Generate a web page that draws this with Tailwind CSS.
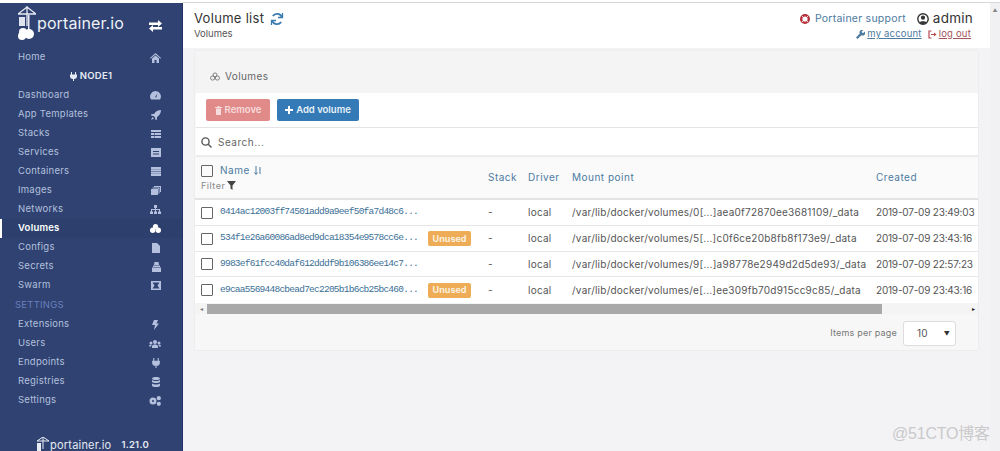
<!DOCTYPE html>
<html lang="en">
<head>
<meta charset="UTF-8">
<title>Volume list - Portainer</title>
<script src="https://cdn.jsdelivr.net/npm/@tailwindcss/browser@4"></script>
</head>
<body class="bg-white">
<div class="relative w-[1000px] h-[451px] overflow-hidden pt-[3px] flex font-['Inter',sans-serif]">

    <!-- Sidebar -->
    <aside class="w-[183px] h-[448px] shrink-0 overflow-hidden bg-[#2f4271] border-r border-[#23306a] text-[#b4c0de] text-[9.5px] tracking-[0.25px] flex flex-col">
        <div class="h-[45px] shrink-0 pl-[18px] pr-[20px] flex items-center justify-between">
            <div class="flex items-center">
                <svg class="w-[18px] h-[36px] -mt-[3px]" viewBox="0 0 18 36">
                    <path d="M0 8 L9 1 L18 8 M9 0 V20 M0 8 H18" fill="none" stroke="#e8ecf4" stroke-width="1.3"/>
                    <rect x="1" y="11" width="6" height="9" fill="#dfe4ee"/>
                    <rect x="10" y="9" width="1.5" height="17" fill="#e8ecf4"/>
                    <circle cx="5" cy="26" r="4" fill="#fff"/><circle cx="11" cy="28" r="5" fill="#fff"/><circle cx="4" cy="30" r="4" fill="#fff"/>
                </svg>
                <span class="ml-[1px] text-[#eef1f7] text-[16px] tracking-[0.1px] -mt-[5px]">portainer.io</span>
            </div>
            <svg class="w-[13px] h-[12px]" viewBox="0 0 13 12" fill="#fff"><path d="M0 2.5h9V0l4 3.5L9 7V5H0zM13 7H4V5L0 8.5 4 12V9.5h9z"/></svg>
        </div>
        <nav class="flex flex-col shrink-0">
            <a class="h-[19px] pl-[18px] pr-[21px] flex items-center justify-between">Home
                <svg class="w-[11px] h-[10px]" viewBox="0 0 11 10" fill="#b4c0de"><path d="M5.5 0 11 5l-.6.7L5.5 1.4.6 5.7 0 5zM2 5.5l3.5-3 3.500 3V10H6.500V7h-2v3H2z"/></svg></a>
            <div class="h-[19px] flex items-center justify-center gap-[3px] text-[#e6eaf3] font-semibold">
                <svg class="w-[7px] h-[9px]" viewBox="0 0 7 9" fill="#e6eaf3"><path d="M1 0h1v2.500h3V0h1v2.500h1V4a3 3 0 0 1-3 3v2H3V7a3 3 0 0 1-3-3V2.500h1z"/></svg>NODE1</div>
            <a class="h-[19px] pl-[18px] pr-[21px] flex items-center justify-between">Dashboard
                <svg class="w-[11px] h-[9px]" viewBox="0 0 11 9" fill="#b4c0de"><path d="M5.500 0A5.500 5.500 0 0 0 1 8.500h9A5.500 5.500 0 0 0 5.500 0zm.7 6.500-1.200-.6L7.500 2.500z"/></svg></a>
            <a class="h-[19px] pl-[18px] pr-[21px] flex items-center justify-between">App Templates
                <svg class="w-[10px] h-[10px]" viewBox="0 0 10 10" fill="#b4c0de"><path d="M10 0C7 0 4.500 1.500 3 4H.5L0 5.500l2.500.5 1.500 1.500.5 2.500L6 9.500V7c2.500-1.500 4-4 4-7zM1.500 7 0 10l3-1.500z"/></svg></a>
            <a class="h-[19px] pl-[18px] pr-[21px] flex items-center justify-between">Stacks
                <svg class="w-[10px] h-[8px]" viewBox="0 0 10 8" fill="#b4c0de"><path d="M0 0h10v2H0zM0 3h3v2H0zM3.500 3H10v2H3.500zM0 6h3v2H0zM3.500 6H10v2H3.500z"/></svg></a>
            <a class="h-[19px] pl-[18px] pr-[21px] flex items-center justify-between">Services
                <svg class="w-[10px] h-[9px]" viewBox="0 0 10 9" fill="#b4c0de"><path fill-rule="evenodd" d="M0 0h10v9H0zM2 3v1h6V3zM2 5.500v1h6v-1z"/></svg></a>
            <a class="h-[19px] pl-[18px] pr-[21px] flex items-center justify-between">Containers
                <svg class="w-[10px] h-[9px]" viewBox="0 0 10 9" fill="#b4c0de"><path d="M0 0h10v2H0zM0 2.300h10v2H0zM0 4.700h10v2H0zM0 7h10v2H0z"/></svg></a>
            <a class="h-[19px] pl-[18px] pr-[21px] flex items-center justify-between">Images
                <svg class="w-[10px] h-[9px]" viewBox="0 0 10 9" fill="#b4c0de"><path d="M3 0h7v6H9V1H3zM1.500 1.500h7v6h-1v-5h-6zM0 3h7v6H0z"/></svg></a>
            <a class="h-[19px] pl-[18px] pr-[21px] flex items-center justify-between">Networks
                <svg class="w-[11px] h-[9px]" viewBox="0 0 11 9" fill="#b4c0de"><path d="M4 0h3v3H6v1h4v2.500h1V9H8V6.500h1V5H6v1.500h1V9H4V6.500h1V5H2v1.500h1V9H0V6.500h1V4h4V3H4z"/></svg></a>
            <a class="relative h-[19px] pl-[18px] pr-[21px] flex items-center justify-between text-white font-semibold bg-[#2d3f6c]">
                <span class="absolute left-0 top-0 w-[2px] h-[19px] bg-white"></span>Volumes
                <svg class="w-[11px] h-[9px]" viewBox="0 0 11 9" fill="#fff"><circle cx="5.500" cy="2.600" r="2.600"/><circle cx="2.700" cy="6.300" r="2.700"/><circle cx="8.300" cy="6.300" r="2.700"/></svg></a>
            <a class="h-[19px] pl-[18px] pr-[21px] flex items-center justify-between">Configs
                <svg class="w-[8px] h-[10px] mr-[1px]" viewBox="0 0 8 10" fill="#b4c0de"><path d="M0 0h5l3 3v7H0z"/></svg></a>
            <a class="h-[19px] pl-[18px] pr-[21px] flex items-center justify-between">Secrets
                <svg class="w-[9px] h-[10px]" viewBox="0 0 9 10" fill="#b4c0de"><path d="M2.500 0h4l.5 3H2zM1 3.500h7V5H1zM0 5.500h9V10H0z"/></svg></a>
            <a class="h-[19px] pl-[18px] pr-[21px] flex items-center justify-between">Swarm
                <svg class="w-[10px] h-[9px]" viewBox="0 0 10 9" fill="#b4c0de"><path fill-rule="evenodd" d="M0 0h10v9H0zM1.500 1.500 3.500 4.500 1.500 7.500h7l-2-3 2-3z"/></svg></a>
            <div class="h-[19px] mt-[1px] pl-[15px] flex items-center text-[#6a80bd]">SETTINGS</div>
            <a class="h-[19px] pl-[18px] pr-[21px] flex items-center justify-between">Extensions
                <svg class="w-[7px] h-[10px] mr-[2px]" viewBox="0 0 7 10" fill="#b4c0de"><path d="M2 0h4L4.500 3.500H7L2 10l1-5H0z"/></svg></a>
            <a class="h-[19px] pl-[18px] pr-[21px] flex items-center justify-between">Users
                <svg class="w-[12px] h-[8px]" viewBox="0 0 12 8" fill="#b4c0de"><circle cx="6" cy="2" r="2"/><circle cx="2" cy="3" r="1.500"/><circle cx="10" cy="3" r="1.500"/><path d="M3 8V6.500C3 5 4.500 4.500 6 4.500s3 .5 3 2V8zM0 6.500C0 5 1 4.800 2 4.800l.5.200L2 6.500zM12 6.500c0-1.500-1-1.700-2-1.700l-.5.200.5 1.500z"/></svg></a>
            <a class="h-[19px] pl-[18px] pr-[21px] flex items-center justify-between">Endpoints
                <svg class="w-[8px] h-[10px] mr-[1px]" viewBox="0 0 7 9" fill="#b4c0de"><path d="M1 0h1v2.500h3V0h1v2.500h1V4a3 3 0 0 1-3 3v2H3V7a3 3 0 0 1-3-3V2.500h1z"/></svg></a>
            <a class="h-[19px] pl-[18px] pr-[21px] flex items-center justify-between">Registries
                <svg class="w-[8px] h-[10px] mr-[1px]" viewBox="0 0 8 10" fill="#b4c0de"><path d="M0 1.500C0 .5 2 0 4 0s4 .5 4 1.500S6 3 4 3 0 2.500 0 1.500zM0 3c1 .8 2.500 1 4 1s3-.2 4-1v2c-1 .8-2.500 1-4 1S1 5.800 0 5zM0 6.500c1 .8 2.500 1 4 1s3-.2 4-1v2C8 9.500 6 10 4 10S0 9.500 0 8.500z"/></svg></a>
            <a class="h-[19px] pl-[18px] pr-[21px] flex items-center justify-between">Settings
                <svg class="w-[12px] h-[10px]" viewBox="0 0 12 10" fill="#b4c0de"><path fill-rule="evenodd" d="M4 1.500a3.500 3.500 0 1 0 0 7 3.500 3.500 0 0 0 0-7zM4 4a1 1 0 1 1 0 2 1 1 0 0 1 0-2z"/><circle cx="9.800" cy="2.200" r="2.100"/><circle cx="9.800" cy="7.800" r="2.100"/></svg></a>
        </nav>
        <div class="mt-[27px] shrink-0 flex items-center justify-center gap-[1px] pl-[4px] text-[#e6eaf3]">
            <svg class="w-[12px] h-[17px]" viewBox="0 0 12 17"><path d="M0 4 6 0l6 4M6 0v12M0 4h12" fill="none" stroke="#e8ecf4"/><rect x="0" y="6" width="4" height="11" fill="#e8ecf4"/></svg>
            <span class="text-[11px] tracking-[0.2px]">portainer.io</span>
            <span class="ml-[9px] text-[9.5px] font-semibold">1.21.0</span>
        </div>
    </aside>

    <!-- Main -->
    <main class="relative flex-1 min-w-0 bg-[#f3f3f5] border-t border-[#d8d8d8] -mt-[1px] text-[#444]">
        <header class="w-[807px] h-[45px] bg-white pl-[11px] pr-[17px] pt-[8px] flex justify-between">
            <div>
                <div class="flex items-center gap-[6px] text-[13px] tracking-[0.3px] text-[#333] h-[15px]">Volume list
                    <svg class="w-[14px] h-[14px]" viewBox="0 0 14 14" fill="none" stroke="#3b7cb0" stroke-width="1.800"><path d="M12 5.500A5.200 5.200 0 0 0 2.800 4M2 8.500A5.200 5.200 0 0 0 11.200 10"/><path d="M12.500 1v4.500H8M1.500 13V8.500H6" stroke-width="1.300"/></svg>
                </div>
                <div class="mt-[1px] text-[9.5px] text-[#555]">Volumes</div>
            </div>
            <div class="flex flex-col items-end">
                <div class="flex items-center text-[10.5px] tracking-[0.25px] h-[15px]">
                    <svg class="w-[10px] h-[10px] mr-[5px]" viewBox="0 0 10 10"><circle cx="5" cy="5" r="3.800" fill="#fff" stroke="#b5303a" stroke-width="2.400"/><path d="M2 2l6 6M8 2 2 8" stroke="#fff" stroke-width=".8"/></svg>
                    <span class="text-[#4d7a9f]">Portainer support</span>
                    <svg class="w-[12px] h-[12px] ml-[11px] mr-[4px]" viewBox="0 0 12 12"><circle cx="6" cy="6" r="5.200" fill="none" stroke="#333" stroke-width="1.400"/><circle cx="6" cy="4.700" r="2.100" fill="#333"/><path d="M2.500 9.500C3.500 7.800 8.500 7.800 9.500 9.500L6 11.500z" fill="#333"/></svg>
                    <span class="text-[13.5px] text-[#333]">admin</span>
                </div>
                <div class="mt-[1px] mr-[2px] flex items-center text-[9.5px] tracking-[0.2px]">
                    <svg class="w-[9px] h-[9px] mr-[2px]" viewBox="0 0 9 9" fill="#4d7a9f"><path d="M9 1.500 7.200 3 6 2.700 5.700 1.500 7.400 0A2.700 2.700 0 0 0 3.800 3.600L0 7.400 1.500 9l3.900-3.800A2.700 2.700 0 0 0 9 1.500z"/></svg>
                    <a class="text-[#4d7a9f] underline">my account</a>
                    <svg class="w-[9px] h-[9px] ml-[6px] mr-[2px]" viewBox="0 0 9 9" fill="none" stroke="#b5494f" stroke-width="1.200"><path d="M3.500 1H1v7h2.500M3 4.500h3.500"/><path d="M6 2.500 8.500 4.500 6 6.500z" fill="#b5494f" stroke="none"/></svg>
                    <a class="text-[#a4545a] underline">log out</a>
                </div>
            </div>
        </header>

        <!-- Volumes panel -->
        <section class="absolute left-[12px] top-[48px] w-[783px] h-[299px] bg-[#f7f7f8] shadow-[0_0_1px_rgba(0,0,0,0.15)]">
            <div class="h-[42px] pl-[15px] pt-[8px] flex items-center gap-[5px] text-[10px] tracking-[0.4px] text-[#666] bg-[#f4f4f5]">
                <svg class="w-[10px] h-[9px]" viewBox="0 0 11 9" fill="none" stroke="#777"><circle cx="5.500" cy="2.800" r="2.200"/><circle cx="2.900" cy="6.200" r="2.300"/><circle cx="8.100" cy="6.200" r="2.300"/></svg>Volumes
            </div>
            <div class="h-[35px] bg-white ml-[1px] flex items-center pl-[10px] gap-[7px] text-[9.5px] font-semibold text-white border-b border-[#e4e4e4]">
                <button class="w-[64px] h-[22px] bg-[#e18a8a] text-[#f6dcdc] rounded-[2px] flex items-center justify-center gap-[3px]">
                    <svg class="w-[7px] h-[9px]" viewBox="0 0 7 9" fill="#f6dcdc"><path d="M0 1h7v1H0zM1 2.500h5V9H1zM2.500 0h2v1h-2z"/></svg>Remove</button>
                <button class="w-[82px] h-[22px] bg-[#337ab7] text-[#e9f1f8] rounded-[2px] flex items-center justify-center gap-[3px]">
                    <svg class="w-[8px] h-[8px]" viewBox="0 0 8 8" fill="#fff"><path d="M3 0h2v3h3v2H5v3H3V5H0V3h3z"/></svg>Add volume</button>
            </div>
            <div class="h-[29px] bg-white ml-[1px] pl-[5px] pt-[1px] flex items-center gap-[6px] text-[10px] tracking-[0.5px] text-[#666] border-b-2 border-[#ececec]">
                <svg class="w-[11px] h-[11px]" viewBox="0 0 11 11" fill="none" stroke="#555" stroke-width="1.400"><circle cx="4.500" cy="4.500" r="3.600"/><path d="M7.200 7.200 10.500 10.500"/></svg>Search...
            </div>

            <!-- Table -->
            <div class="text-[10px] tracking-[0.23px] text-[#555]">
                <div class="h-[42px] mt-[1px] pb-[2px] bg-[#fafafb] border-b-2 border-[#e3e3e3] grid grid-cols-[293px_40px_44px_304px_1fr] items-center tracking-[0.5px] text-[#4d7a9f]">
                    <div class="pl-[6px] self-start pt-[5px]">
                        <div class="flex items-center gap-[7px]">
                            <span class="w-[12px] h-[12px] border-[1.5px] border-[#666] rounded-[1px]"></span>Name
                            <svg class="w-[8px] h-[9px] -ml-[3px]" viewBox="0 0 8 9" fill="none" stroke="#4d7a9f"><path d="M2 0v8M.5 6.500 2 8.500l1.500-2M6 1v7"/></svg>
                        </div>
                        <div class="mt-[1px] flex items-center gap-[2px] text-[9px] text-[#888]">Filter
                            <svg class="w-[9px] h-[9px]" viewBox="0 0 9 9" fill="#444"><path d="M0 0h9L5.500 4.500V9l-2-1.500v-3z"/></svg>
                        </div>
                    </div>
                    <div>Stack</div><div>Driver</div><div>Mount point</div><div>Created</div>
                </div>

                <div class="h-[26px] bg-white border-b border-[#e6e6e6] grid grid-cols-[293px_40px_44px_304px_1fr] items-center whitespace-nowrap">
                    <div class="pl-[6px] flex items-center gap-[7px]"><span class="w-[12px] h-[12px] border-[1.5px] border-[#666] rounded-[1px]"></span><a class="font-['Liberation_Mono',monospace] text-[9.5px] tracking-[-0.75px] text-[#3b6f96]">0414ac12003ff74501add9a9eef50fa7d48c6...</a></div>
                    <div>-</div><div>local</div><div>/var/lib/docker/volumes/0[...]aea0f72870ee3681109/_data</div><div class="tracking-[-0.2px]">2019-07-09 23:49:03</div>
                </div>
                <div class="h-[26px] bg-white border-b border-[#e6e6e6] grid grid-cols-[293px_40px_44px_304px_1fr] items-center whitespace-nowrap">
                    <div class="pl-[6px] flex items-center gap-[7px]"><span class="w-[12px] h-[12px] border-[1.5px] border-[#666] rounded-[1px]"></span><a class="font-['Liberation_Mono',monospace] text-[9.5px] tracking-[-0.75px] text-[#3b6f96]">534f1e26a60086ad8ed9dca18354e9578cc6e...</a><span class="ml-[3px] w-[43px] h-[15px] bg-[#eeac57] rounded-[2px] flex items-center justify-center text-[9px] font-bold tracking-normal text-[#fbf0df]">Unused</span></div>
                    <div>-</div><div>local</div><div>/var/lib/docker/volumes/5[...]c0f6ce20b8fb8f173e9/_data</div><div class="tracking-[-0.2px]">2019-07-09 23:43:16</div>
                </div>
                <div class="h-[25px] bg-white border-b border-[#e6e6e6] grid grid-cols-[293px_40px_44px_304px_1fr] items-center whitespace-nowrap">
                    <div class="pl-[6px] flex items-center gap-[7px]"><span class="w-[12px] h-[12px] border-[1.5px] border-[#666] rounded-[1px]"></span><a class="font-['Liberation_Mono',monospace] text-[9.5px] tracking-[-0.75px] text-[#3b6f96]">9983ef61fcc40daf612dddf9b106386ee14c7...</a></div>
                    <div>-</div><div>local</div><div>/var/lib/docker/volumes/9[...]a98778e2949d2d5de93/_data</div><div class="tracking-[-0.2px]">2019-07-09 22:57:23</div>
                </div>
                <div class="h-[26px] bg-white grid grid-cols-[293px_40px_44px_304px_1fr] items-center whitespace-nowrap">
                    <div class="pl-[6px] flex items-center gap-[7px]"><span class="w-[12px] h-[12px] border-[1.5px] border-[#666] rounded-[1px]"></span><a class="font-['Liberation_Mono',monospace] text-[9.5px] tracking-[-0.75px] text-[#3b6f96]">e9caa5569448cbead7ec2205b1b6cb25bc460...</a><span class="ml-[3px] w-[43px] h-[15px] bg-[#eeac57] rounded-[2px] flex items-center justify-center text-[9px] font-bold tracking-normal text-[#fbf0df]">Unused</span></div>
                    <div>-</div><div>local</div><div>/var/lib/docker/volumes/e[...]ee309fb70d915cc9c85/_data</div><div class="tracking-[-0.2px]">2019-07-09 23:43:16</div>
                </div>
            </div>

            <!-- Horizontal scrollbar -->
            <div class="h-[11px] flex items-center bg-[#f4f4f5]">
                <span class="w-[12px] text-center text-[6px] text-[#777]">◂</span>
                <div class="w-[675px] h-[10px] bg-[#a9a9a9]"></div>
                <span class="ml-auto mr-[3px] text-[6px] text-[#222]">▸</span>
            </div>

            <div class="mt-[4px] h-[30px] flex items-center justify-end pr-[22px] text-[9px] tracking-[0.2px] text-[#777]">
                Items per page
                <div class="ml-[6px] w-[53px] h-[25px] bg-white border border-[#ddd] rounded-[3px] flex items-center justify-between pl-[13px] pr-[5px] text-[10px] text-[#555]">10<span class="text-[6px] text-[#333]">▼</span></div>
            </div>
        </section>

        <!-- Page scrollbar -->
        <div class="absolute right-0 top-0 w-[10px] h-[448px] bg-[#f1f1f3] text-center text-[5px] leading-[14px] text-[#888]">▲</div>
    </main>

    <div class="absolute left-[892px] top-[422px] text-[16px] tracking-[-0.2px] text-[#c9c9cb] font-['Liberation_Sans','Noto_Sans_CJK_SC',sans-serif]">@51CTO博客</div>
</div>
</body>
</html>
